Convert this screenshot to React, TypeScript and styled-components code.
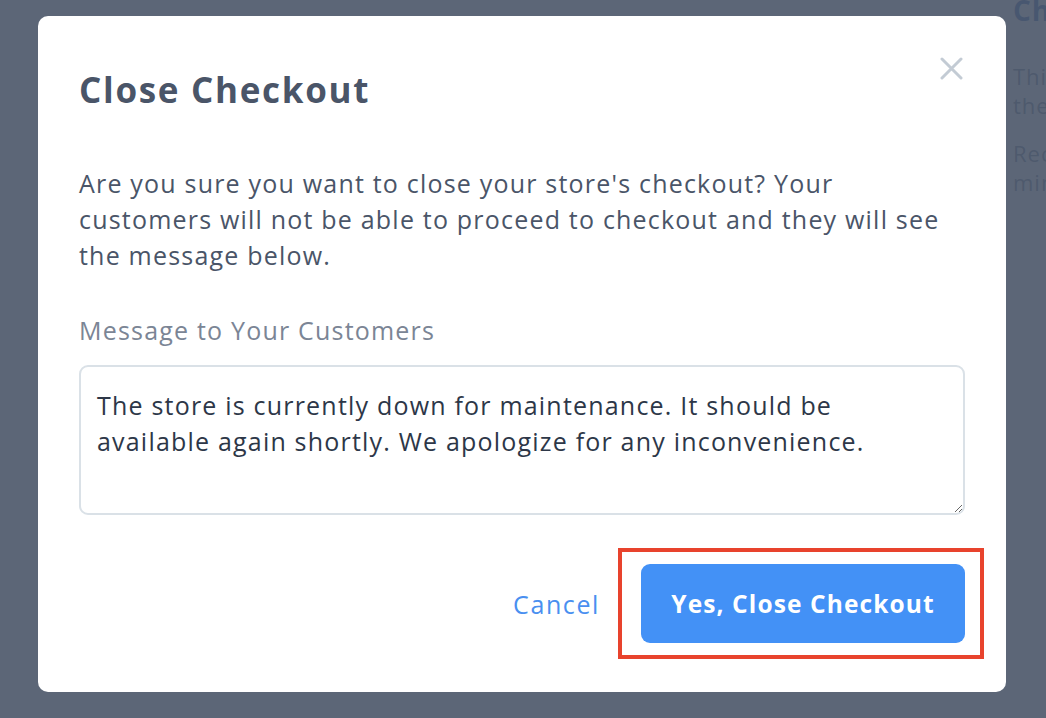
import React from "react";
import styled, { createGlobalStyle } from "styled-components";

const Global = createGlobalStyle`
  html, body { margin: 0; padding: 0; height: 100%; overflow: hidden; }
  body { font-family: "Open Sans", "Noto Sans", sans-serif; background: #ffffff; }
  * { box-sizing: border-box; }
`;

const Page = styled.div`
  display: grid;
  grid-template-columns: 1005px 600px;
  column-gap: 8px;
  width: 1046px;
  height: 718px;
  overflow: hidden;
  background: #ffffff;
`;

const MainArea = styled.div``;

const Sidebar = styled.aside`
  margin-top: -8px;
  font-size: 22px;
  line-height: 29px;
  color: #718096;
  letter-spacing: 1px;
`;

const SideHeading = styled.h2`
  margin: 0 0 34px;
  font-size: 28px;
  line-height: 36px;
  font-weight: 700;
  color: #3a6cb5;
`;

const SideText = styled.p`
  margin: 0 0 19px;
  white-space: nowrap;
`;

const Overlay = styled.div`
  position: fixed;
  inset: 0;
  background: rgba(74, 85, 104, 0.9);
  display: flex;
  align-items: flex-start;
  padding: 16px 0 0 38px;
`;

const Modal = styled.div`
  width: 968px;
  height: 676px;
  background: #ffffff;
  border-radius: 10px;
  padding: 46px 41px 49px 41px;
  display: flex;
  flex-direction: column;
  position: relative;
`;

const Header = styled.div`
  display: flex;
  justify-content: space-between;
  align-items: flex-start;
`;

const Title = styled.h1`
  margin: 0;
  font-size: 35px;
  line-height: 56px;
  font-weight: 700;
  color: #4a5568;
  letter-spacing: 1.7px;
`;

const CloseButton = styled.button`
  border: 0;
  background: transparent;
  padding: 0;
  margin: -5px 2px 0 0;
  width: 23px;
  height: 23px;
  cursor: pointer;
  display: flex;
`;

const Body = styled.p`
  margin: 47px 0 0;
  font-size: 25px;
  line-height: 36px;
  color: #4a5568;
  letter-spacing: 1.2px;
`;

const Label = styled.label`
  display: block;
  margin: 39px 0 0;
  font-size: 25px;
  line-height: 36px;
  color: #7b8595;
  letter-spacing: 1.2px;
`;

const TextArea = styled.textarea`
  display: block;
  margin-top: 17px;
  width: 886px;
  height: 150px;
  border: 2px solid #dae1e7;
  border-radius: 9px;
  padding: 20px 40px 18px 16px;
  font-family: inherit;
  font-size: 25px;
  line-height: 36px;
  color: #2d3748;
  letter-spacing: 1.2px;
  resize: vertical;
  outline: none;
`;

const Footer = styled.div`
  margin-top: auto;
  display: flex;
  justify-content: flex-end;
  align-items: center;
  gap: 41px;
`;

const CancelLink = styled.button`
  border: 0;
  background: transparent;
  padding: 0;
  font-family: inherit;
  font-size: 25px;
  color: #4a8ff0;
  letter-spacing: 1.6px;
  cursor: pointer;
`;

const Highlight = styled.div`
  position: relative;
`;

const HighlightFrame = styled.span`
  position: absolute;
  top: -16px;
  left: -23px;
  right: -19px;
  bottom: -16px;
  border: 4px solid #e8432d;
  pointer-events: none;
`;

const PrimaryButton = styled.button`
  display: block;
  width: 324px;
  height: 79px;
  border: 0;
  border-radius: 9px;
  background: #4391f6;
  color: #ffffff;
  font-family: inherit;
  font-size: 24.5px;
  font-weight: 700;
  letter-spacing: 1.1px;
  cursor: pointer;
`;

export default function App() {
  return (
    <>
      <Global />
      <Page>
        <MainArea />
        <Sidebar>
          <SideHeading>Checkout Status</SideHeading>
          <SideText>
            This closes checkout for all customers until you reopen
            <br />
            the store from this page.
          </SideText>
          <SideText>
            Recommended for maintenance that takes a few
            <br />
            minutes.
          </SideText>
        </Sidebar>
      </Page>
      <Overlay>
        <Modal role="dialog" aria-labelledby="close-checkout-title">
          <Header>
            <Title id="close-checkout-title">Close Checkout</Title>
            <CloseButton aria-label="Close">
              <svg width="23" height="23" viewBox="0 0 23 23">
                <path d="M2 2 L21 21 M21 2 L2 21" stroke="#c3cbd4" strokeWidth="3" strokeLinecap="round" />
              </svg>
            </CloseButton>
          </Header>
          <Body>
            Are you sure you want to close your store's checkout? Your
            <br />
            customers will not be able to proceed to checkout and they will see
            <br />
            the message below.
          </Body>
          <Label htmlFor="customer-message">Message to Your Customers</Label>
          <TextArea
            id="customer-message"
            defaultValue="The store is currently down for maintenance. It should be available again shortly. We apologize for any inconvenience."
          />
          <Footer>
            <CancelLink>Cancel</CancelLink>
            <Highlight>
              <PrimaryButton>Yes, Close Checkout</PrimaryButton>
              <HighlightFrame />
            </Highlight>
          </Footer>
        </Modal>
      </Overlay>
    </>
  );
}
